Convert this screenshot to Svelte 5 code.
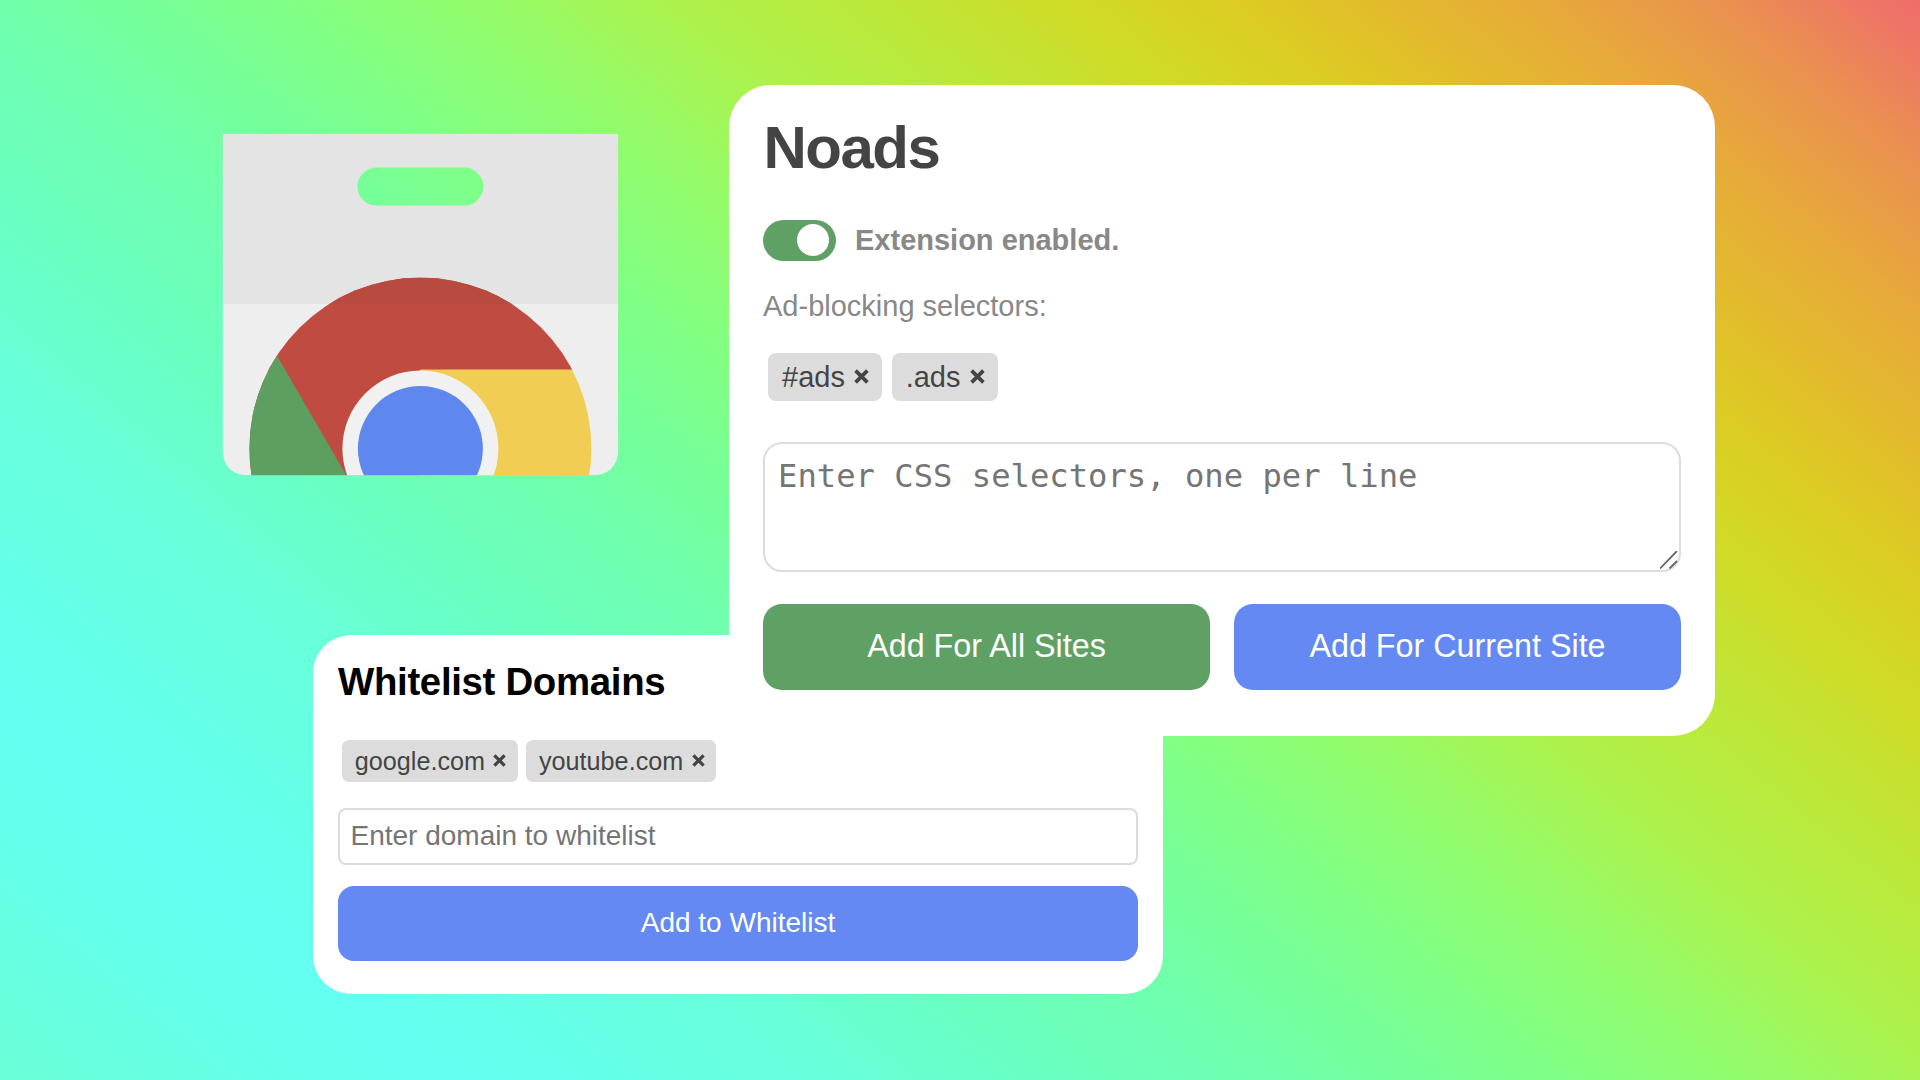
<script>
  const selectors = ['#ads', '.ads'];
  const domains = ['google.com', 'youtube.com'];
</script>

<main>
  <svg class="logo" viewBox="-0.4 -0.6 397 343" aria-label="Chrome Web Store">
    <defs>
      <clipPath id="bag"><path d="M0 0H396V314Q396 342 368 342H28Q0 342 0 314Z" /></clipPath>
      <clipPath id="disc"><circle cx="198" cy="315" r="171" /></clipPath>
    </defs>
    <g clip-path="url(#bag)">
      <path fill="#e4e4e4" fill-rule="evenodd" d="M0 0H396V171H0ZM154 34A19 19 0 0 0 154 72H242A19 19 0 0 0 242 34Z" />
      <path fill="#eeeeee" d="M0 170.500H396V342H0Z" />
      <g clip-path="url(#disc)">
        <path fill="#c04b40" d="M27 144H369V236.500H198V342H27Z" />
        <path fill="#b84a40" d="M27 144H369V171H27Z" />
        <path fill="#5d9f61" d="M55 223L124 342H20V223Z" />
        <path fill="#f2cd54" d="M198 236H370V342H198Z" />
      </g>
      <circle cx="198" cy="315" r="78" fill="#f1f1f1" />
      <circle cx="198" cy="315" r="62.5" fill="#5f88ef" />
    </g>
  </svg>

  <section class="card whitelist">
    <h2>Whitelist Domains</h2>
    <div class="tags">
      {#each domains as domain}
        <span class="tag">{domain}<svg viewBox="0 0 14 14"><path d="M1.500 1.500L12.500 12.500M12.500 1.500L1.500 12.500" /></svg></span>
      {/each}
    </div>
    <input type="text" placeholder="Enter domain to whitelist" />
    <button class="blue">Add to Whitelist</button>
  </section>

  <section class="card popup">
    <h1>Noads</h1>
    <div class="status">
      <span class="switch"></span>
      <strong>Extension enabled.</strong>
    </div>
    <p>Ad-blocking selectors:</p>
    <div class="tags">
      {#each selectors as selector}
        <span class="tag">{selector}<svg viewBox="0 0 14 14"><path d="M1.500 1.500L12.500 12.500M12.500 1.500L1.500 12.500" /></svg></span>
      {/each}
    </div>
    <div class="field">
      <textarea placeholder="Enter CSS selectors, one per line"></textarea>
      <svg class="grip" viewBox="0 0 18 18"><path d="M0 17.500L17 0M9.500 17.500L17 10" /></svg>
    </div>
    <div class="actions">
      <button class="green">Add For All Sites</button>
      <button class="blue">Add For Current Site</button>
    </div>
  </section>
</main>

<style>
  :global(body) { margin: 0; }
  main {
    position: relative;
    width: 1920px;
    height: 1080px;
    overflow: hidden;
    font-family: "Liberation Sans", Arial, sans-serif;
    background: linear-gradient(40deg, #69ffd6 0%, #66ffe6 7%, #64fff2 13.8%, #67ffdc 25.5%, #69ffc4 32%, #6fffb0 39%, #76ff98 44.5%, #84ff80 50%, #96fb68 55.5%, #adf24c 61%, #bce83a 67%, #cfdc28 73%, #d8d224 76.5%, #dfc724 80%, #e3b92e 83.5%, #e7aa3a 88%, #ea9150 93.7%, #ee7566 98.3%, #f06c6c 100%);
  }
  h1, h2, p { margin: 0; }
  .logo { position: absolute; left: 222px; top: 133px; width: 397px; height: 343px; }
  .card { position: absolute; box-sizing: border-box; background: #fff; display: flex; flex-direction: column; }
  .whitelist { left: 313px; top: 635px; width: 850px; height: 359px; border-radius: 38px; padding: 25px; }
  .popup { left: 729px; top: 85px; width: 986px; height: 651px; border-radius: 42px; padding: 29px 34px; }
  h1 { font-size: 60px; line-height: 66px; color: #444; letter-spacing: -1.5px; padding: 1px 0 0 0.5px; }
  h2 { font-size: 38.4px; line-height: 44px; color: #000; letter-spacing: -0.32px; }
  .status { display: flex; align-items: center; gap: 19px; height: 42px; margin-top: 38px; }
  .switch { box-sizing: border-box; width: 73px; height: 41px; padding: 4px 7px; border-radius: 21px; background: #5fa164; display: flex; justify-content: flex-end; }
  .switch::after { content: ""; width: 32px; height: 32px; border-radius: 50%; background: #fff; }
  strong { font-size: 29px; color: #888; }
  p { font-size: 29px; line-height: 34px; color: #888; margin-top: 28px; }
  .tags { display: flex; }
  .tag { box-sizing: border-box; display: flex; align-items: center; background: #dcdcdc; color: #444; }
  .tag svg { fill: none; stroke: #444; stroke-width: 3.5; position: relative; top: -1px; }
  .popup .tags { gap: 9.3px; margin: 30px 0 0 5px; }
  .popup .tag { height: 48px; padding: 0 13.5px 0 14px; border-radius: 8px; font-size: 29px; }
  .popup .tag svg { width: 15px; height: 15px; margin-left: 9px; }
  .whitelist .tags { gap: 8px; margin: 36px 0 0 4px; }
  .whitelist .tag { height: 42px; padding: 0 11.8px 0 12.8px; border-radius: 7px; font-size: 25.2px; }
  .whitelist .tag svg { width: 13px; height: 13px; margin-left: 8.4px; }
  input, textarea { box-sizing: border-box; width: 100%; margin: 0; border: 2px solid #dcdcdc; background: #fff; outline: none; }
  input::placeholder, textarea::placeholder { color: #757575; opacity: 1; }
  input { height: 57px; flex: none; margin-top: 26px; padding: 0 10.500px 1px; border-radius: 8px; font: 28px "Liberation Sans", Arial, sans-serif; }
  .field { position: relative; height: 130px; margin-top: 41px; }
  textarea { display: block; height: 130px; resize: none; border-radius: 19px; padding: 13px 13px 11px; font: 32.2px/38px "DejaVu Sans Mono", monospace; }
  .grip { position: absolute; right: 3px; bottom: 3px; width: 18px; height: 18px; fill: none; stroke: #666; stroke-width: 1.8; }
  button { border: 0; padding: 0 0 2px; color: #fff; font-family: inherit; }
  .blue { background: #6489f2; }
  .green { background: #5fa164; }
  .whitelist button { height: 75px; margin-top: 21px; padding-bottom: 1px; border-radius: 16px; font-size: 28px; }
  .actions { display: flex; gap: 24px; margin-top: 32px; }
  .actions button { flex: 1; height: 86px; border-radius: 19px; font-size: 32.3px; }
</style>
